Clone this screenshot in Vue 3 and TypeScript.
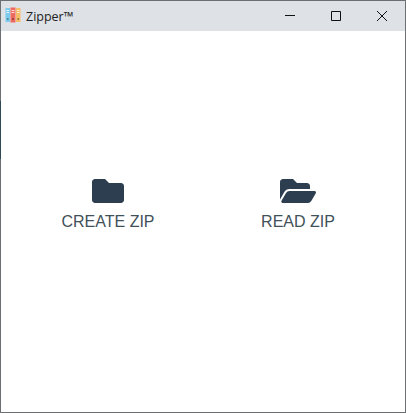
<template>
  <div class="window">
    <span class="edge-mark" aria-hidden="true" />
    <header class="titlebar">
      <svg class="app-icon" viewBox="0 0 16 16" aria-hidden="true">
        <rect x="0.5" y="1" width="4.5" height="14" fill="#7ccbed" />
        <rect x="5.5" y="0.5" width="5" height="15" fill="#ee6a5f" />
        <rect x="11" y="1" width="4.5" height="14" fill="#f6bd68" />
        <rect x="1.5" y="3" width="2.5" height="1" fill="#e8f6fc" />
        <rect x="1.5" y="5" width="2.5" height="1" fill="#e8f6fc" />
        <rect x="6.5" y="3" width="3" height="1" fill="#fbd9d6" />
        <rect x="6.5" y="5" width="3" height="1" fill="#fbd9d6" />
        <rect x="12" y="3" width="2.5" height="1" fill="#fdeccf" />
        <rect x="12" y="5" width="2.5" height="1" fill="#fdeccf" />
        <circle cx="2.75" cy="12" r="1" fill="#4f8199" />
        <circle cx="8" cy="12" r="1" fill="#8a3f37" />
        <circle cx="13.25" cy="12" r="1" fill="#96703a" />
      </svg>
      <span class="title">Zipper™</span>
      <div class="controls">
        <button class="control" type="button" aria-label="Minimize">
          <svg viewBox="0 0 10 10" aria-hidden="true"><path d="M0 4.5h10" /></svg>
        </button>
        <button class="control" type="button" aria-label="Maximize">
          <svg viewBox="0 0 10 10" aria-hidden="true"><path d="M.5.5h9v9h-9z" /></svg>
        </button>
        <button class="control" type="button" aria-label="Close">
          <svg viewBox="0 0 10 10" aria-hidden="true"><path d="M0 0l10 10M10 0L0 10" /></svg>
        </button>
      </div>
    </header>
    <main class="content">
      <button v-for="action in actions" :key="action.label" class="action" type="button">
        <svg class="action-icon" :viewBox="action.viewBox" :style="{ width: `${action.width}px` }" aria-hidden="true">
          <path :d="action.path" />
        </svg>
        <span class="action-label">{{ action.label }}</span>
      </button>
    </main>
  </div>
</template>

<script setup lang="ts">
interface Action {
  label: string;
  viewBox: string;
  width: number;
  path: string;
}

const actions: Action[] = [
  {
    label: 'CREATE ZIP',
    viewBox: '0 0 512 512',
    width: 32,
    path: 'M464 128H272l-64-64H48C21.49 64 0 85.49 0 112v288c0 26.51 21.49 48 48 48h416c26.51 0 48-21.49 48-48V176c0-26.51-21.49-48-48-48z',
  },
  {
    label: 'READ ZIP',
    viewBox: '0 0 576 512',
    width: 36,
    path: 'M572.694 292.093L500.27 416.248A63.997 63.997 0 0 1 444.989 448H45.025c-18.523 0-30.064-20.093-20.731-36.093l72.424-124.155A64 64 0 0 1 152 256h399.964c18.523 0 30.064 20.093 20.73 36.093zM152 224h328v-48c0-26.51-21.49-48-48-48H272l-64-64H48C21.49 64 0 85.49 0 112v278.046l69.077-118.418C86.214 242.25 117.989 224 152 224z',
  },
];
</script>

<style>
html,
body {
  margin: 0;
  background: #fff;
}
</style>

<style scoped>
.window {
  position: relative;
  box-sizing: border-box;
  display: flex;
  flex-direction: column;
  width: 406px;
  height: 413px;
  border: 1px solid #6d7073;
  background: #fff;
}

/* darker stretch of the window edge on the left */
.edge-mark {
  position: absolute;
  top: 100px;
  left: -1px;
  width: 1px;
  height: 58px;
  background: #2f4858;
}

.titlebar {
  display: flex;
  flex: none;
  align-items: center;
  height: 30px;
  padding-left: 4px;
  background: #dee1e6;
}

.app-icon {
  width: 16px;
  height: 16px;
  flex: none;
  margin-bottom: 2px;
}

.title {
  margin-left: 5px;
  font-family: "Open Sans", "Noto Sans", sans-serif;
  font-size: 12.5px;
  color: #222;
}

.controls {
  display: flex;
  margin-left: auto;
}

.control {
  display: flex;
  align-items: center;
  justify-content: center;
  width: 46px;
  height: 30px;
  padding: 0;
  border: 0;
  background: transparent;
}

.control svg {
  width: 10px;
  height: 10px;
  fill: none;
  stroke: #111;
  stroke-width: 1;
}

.content {
  display: grid;
  flex: 1;
  grid-template-columns: 190px 190px;
  justify-content: center;
  align-content: start;
  padding-top: 144px;
}

.action {
  display: flex;
  flex-direction: column;
  align-items: center;
  padding: 0;
  border: 0;
  background: transparent;
}

.action-icon {
  height: 32px;
  fill: #2c3e50;
}

.action-label {
  margin-top: 5px;
  font-family: "Liberation Sans", Arial, sans-serif;
  font-size: 16px;
  line-height: 20px;
  color: #3f5159;
}
</style>
